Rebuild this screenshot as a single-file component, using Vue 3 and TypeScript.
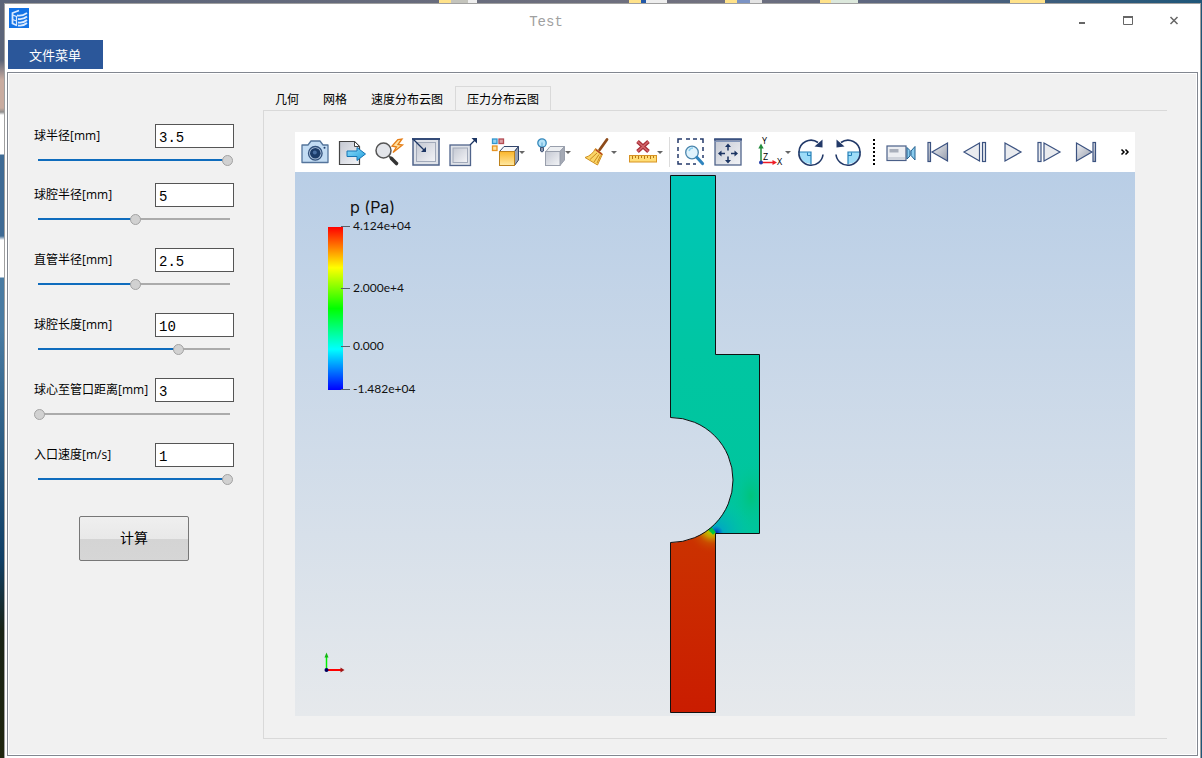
<script setup lang="ts">
import { reactive, ref } from 'vue'

interface Param {
  id: string
  label: string
  value: string
  position: number
}

const params = reactive<Param[]>([
  { id: 'ball-radius', label: '球半径[mm]', value: '3.5', position: 100 },
  { id: 'cavity-radius', label: '球腔半径[mm]', value: '5', position: 51 },
  { id: 'pipe-radius', label: '直管半径[mm]', value: '2.5', position: 51 },
  { id: 'cavity-length', label: '球腔长度[mm]', value: '10', position: 74 },
  { id: 'center-distance', label: '球心至管口距离[mm]', value: '3', position: 0 },
  { id: 'inlet-speed', label: '入口速度[m/s]', value: '1', position: 100 }
])

const tabs: string[] = ['几何', '网格', '速度分布云图', '压力分布云图']
const activeTab = ref<string>('压力分布云图')

const ticks: { y: number; text: string }[] = [
  { y: 55, text: '4.124e+04' },
  { y: 117, text: '2.000e+4' },
  { y: 175, text: '0.000' },
  { y: 218, text: '-1.482e+04' }
]
</script>

<template>
  <div class="desktop">
    <div class="window">
      <header class="titlebar">
        <svg class="app-icon" viewBox="0 0 20 20" aria-hidden="true">
          <rect width="20" height="20" fill="#1473e6" />
          <g fill="none" stroke="#dcebff" stroke-width="1.800">
            <path d="M10 2.500 3.500 5v10.500l4.500 2" />
            <path d="M3.500 7l4 1.500v8.500M3.500 11.500l4 1.500" stroke-width="1.200" />
            <path d="M8 7.500q5 1 10-2.500M9 11q5 1 9-2.500M9 14.500q5 1 9-2.500M9 17.500q5 1 9-2.500" />
          </g>
        </svg>
        <h1 class="title">Test</h1>
        <div class="controls">
          <button type="button" aria-label="最小化">
            <svg viewBox="0 0 12 12"><path d="M3 9h6" stroke="#666" stroke-width="2" /></svg>
          </button>
          <button type="button" aria-label="最大化">
            <svg viewBox="0 0 12 12"><path d="M1 3h10" stroke="#666" stroke-width="2" /><path d="M1.500 3v7.500h9V3" fill="none" stroke="#666" /></svg>
          </button>
          <button type="button" aria-label="关闭">
            <svg viewBox="0 0 12 12"><path d="M2.500 3l7 7M9.500 3l-7 7" stroke="#666" stroke-width="1.500" /></svg>
          </button>
        </div>
      </header>

      <nav class="menubar">
        <button type="button" class="menu">文件菜单</button>
      </nav>

      <main class="workspace">
        <form class="params" @submit.prevent>
          <div v-for="p in params" :key="p.id" class="param">
            <label :for="p.id">{{ p.label }}</label>
            <input :id="p.id" v-model="p.value" class="field" type="text" />
            <input
              v-model.number="p.position"
              class="slider"
              type="range"
              min="0"
              max="100"
              :aria-label="p.label"
              :style="{ '--fill': p.position + '%' }"
            />
          </div>
          <button type="submit" class="compute">计算</button>
        </form>

        <section class="results">
          <div class="tabs" role="tablist">
            <button
              v-for="t in tabs"
              :key="t"
              type="button"
              role="tab"
              class="tab"
              :class="{ active: t === activeTab }"
              :aria-selected="t === activeTab"
              @click="activeTab = t"
            >{{ t }}</button>
          </div>

          <div class="page">
            <div class="toolbar" role="toolbar">
              <button type="button" class="tool" aria-label="截图">
                <svg viewBox="0 0 28 28">
                  <path d="M1 7h6l3-4h9l3 4h5v17.500H1z" fill="#c3dcf3" stroke="#54749b" stroke-width="1.300" stroke-linejoin="round" />
                  <circle cx="14.300" cy="15.300" r="6.800" fill="#b4c9e0" stroke="#33527d" stroke-width="1.300" />
                  <circle cx="14.300" cy="15.300" r="5.300" fill="#1c3c69" />
                  <circle cx="13.800" cy="14.500" r="2" fill="#4a70a3" />
                  <circle cx="23.500" cy="9.700" r="1" fill="#22406c" />
                </svg>
              </button>
              <button type="button" class="tool" aria-label="导出">
                <svg viewBox="0 0 28 28">
                  <defs>
                    <linearGradient id="steel" x1="0" y1="0" x2="1" y2="1"><stop stop-color="#c4c8d2" /><stop offset="1" stop-color="#f3f4f7" /></linearGradient>
                    <linearGradient id="steel-dark" x1="0" y1="0" x2="1" y2="1"><stop stop-color="#f0f1f4" /><stop offset="1" stop-color="#959cab" /></linearGradient>
                    <linearGradient id="sky" x1="0" y1="0" x2="1" y2="1"><stop stop-color="#8ddcfb" /><stop offset="1" stop-color="#22a0dc" /></linearGradient>
                    <linearGradient id="gold" x1="0" y1="0" x2="0" y2="1"><stop stop-color="#fbb62b" /><stop offset="1" stop-color="#ffe9a3" /></linearGradient>
                  </defs>
                  <path d="M1.500 3.500h15l5 5V26.500h-20z" fill="url(#steel)" stroke="#444" stroke-width="1.200" />
                  <path d="M16.500 3.500v5h5z" fill="#fff" stroke="#444" />
                  <path d="M9 13h10V9.500l8.500 6.500-8.500 6.500V18.500H9z" fill="url(#sky)" stroke="#1674b4" />
                </svg>
              </button>
              <button type="button" class="tool" aria-label="重新缩放">
                <svg viewBox="0 0 28 28">
                  <circle cx="8.500" cy="12.500" r="7.500" fill="#e3e5ea" stroke="#555" stroke-width="1.500" />
                  <path d="M14 18l2.500 2.500" stroke="#555" stroke-width="2" />
                  <path d="M16.500 20.500l5 5" stroke="#333" stroke-width="3.600" stroke-linecap="round" />
                  <path d="M23 1.500 17 8l4.500 1L18 14.500 27.500 7l-4.500-.5 4-5.500z" fill="#ffe1a0" stroke="#e57e18" stroke-width="1.300" />
                </svg>
              </button>
              <button type="button" class="tool" aria-label="缩小选区">
                <svg viewBox="0 0 28 28">
                  <rect x="1" y="1" width="26" height="26" fill="#dfe2e8" stroke="#50648b" stroke-width="1.500" />
                  <path d="M0 1h28" stroke="#344b78" stroke-width="2" />
                  <rect x="4.500" y="4.500" width="19" height="19" fill="url(#steel)" stroke="#a2aaba" />
                  <path d="M1.500 1.500 12 12" stroke="#1c3563" stroke-width="1.300" />
                  <path d="M14 14H9l5-5z" fill="#1c3563" />
                </svg>
              </button>
              <button type="button" class="tool" aria-label="放大选区">
                <svg viewBox="0 0 28 28">
                  <rect x="1" y="7" width="20.500" height="20.500" fill="#dfe2e8" stroke="#50648b" stroke-width="1.300" />
                  <rect x="4" y="10" width="14.500" height="14.500" fill="url(#steel)" stroke="#a2aaba" />
                  <path d="M21 7l5-5" stroke="#1c3563" stroke-width="1.300" />
                  <path d="M28 0v5.500L22.500 0z" fill="#1c3563" />
                </svg>
              </button>

              <button type="button" class="tool drop" aria-label="块着色">
                <svg viewBox="0 0 28 28">
                  <rect x="1.500" y="1" width="4.500" height="4.500" fill="#8fd0f2" stroke="#3296cd" stroke-width="1.300" />
                  <rect x="8" y="1" width="4.500" height="4.500" fill="#dca0a5" stroke="#b34c54" stroke-width="1.300" />
                  <rect x="1.500" y="8" width="4.500" height="4.500" fill="#ffe19b" stroke="#e69322" stroke-width="1.300" />
                  <path d="M8.500 13.500 13 8.500h14.500l-4 5z" fill="#f5f6f8" stroke="#33466c" />
                  <path d="M23.500 13.500l4-5V22l-4 5.500z" fill="#97a1b3" stroke="#33466c" />
                  <rect x="8.500" y="13.500" width="15" height="14" fill="url(#gold)" stroke="#bd821c" />
                </svg>
                <i class="caret"></i>
              </button>
              <button type="button" class="tool drop" aria-label="光照">
                <svg viewBox="0 0 28 28">
                  <path d="M9 13.500 13 8.500h14.500l-4.500 5z" fill="#eceef1" stroke="#999fac" />
                  <path d="M23 13.500l4.500-5V22L23 27.500z" fill="#a4a9b4" stroke="#999fac" />
                  <rect x="8.500" y="13.500" width="14.500" height="14" fill="url(#steel)" stroke="#999fac" />
                  <circle cx="5" cy="5" r="4.200" fill="#b5e2f8" stroke="#3689bc" stroke-width="1.300" />
                  <path d="M5 4.500v4" fill="none" stroke="#5ba7d2" />
                  <path d="M3.500 9.500h3v3.500l-1.500 1-1.500-1z" fill="#8c97ad" stroke="#405275" />
                </svg>
                <i class="caret"></i>
              </button>
              <button type="button" class="tool drop" aria-label="清理">
                <svg viewBox="0 0 28 28">
                  <path d="M24 1.500 16.500 12" stroke="#8d4b1a" stroke-width="2.800" stroke-linecap="round" />
                  <path d="M12.500 10.500l7 5.500L14.500 27 2 19.500q7-2 10.500-9z" fill="#fbd567" stroke="#cf9020" />
                  <path d="M12.500 11.500l6.500 5" stroke="#b43c20" stroke-width="1.500" />
                  <path d="M14 15 7 21.500M16 16.500l-5 7.500M17.500 17.500 14 25" stroke="#c98a20" fill="none" />
                </svg>
                <i class="caret"></i>
              </button>
              <button type="button" class="tool drop" aria-label="删除标尺">
                <svg viewBox="0 0 28 28">
                  <path d="M8.500 3.500l11 10M19.500 3.500l-11 10" stroke="#a92f38" stroke-width="3.800" />
                  <path d="M8.500 3.500l11 10M19.500 3.500l-11 10" stroke="#d3686e" stroke-width="1.500" />
                  <rect x=".5" y="17.500" width="27" height="6.500" fill="#ffdd75" stroke="#d79323" />
                  <path d="M3.500 18v3M6.500 18v2M9.500 18v3M12.500 18v2M15.500 18v3M18.500 18v2M21.500 18v3M24.500 18v2" stroke="#b97814" />
                </svg>
                <i class="caret"></i>
              </button>

              <span class="separator"></span>

              <button type="button" class="tool" aria-label="框选缩放">
                <svg viewBox="0 0 28 28">
                  <path d="M0 5V1h4M8 1h4M15 1h4M22 1h3v4M25 9v4M25 17v3M0 9v4M0 16v4M0 23v3h4M8 26h4M15 26h3" fill="none" stroke="#243a6b" stroke-width="1.500" />
                  <circle cx="14" cy="14.500" r="6.300" fill="#dff3fd" stroke="#4b86ad" stroke-width="1.300" />
                  <path d="M11 13q1-3 4-3" fill="none" stroke="#8bcdec" stroke-width="1.500" />
                  <path d="M19 19.500l5.500 6" stroke="#2f84be" stroke-width="3.200" stroke-linecap="round" />
                </svg>
              </button>
              <button type="button" class="tool" aria-label="平移">
                <svg viewBox="0 0 28 28">
                  <rect x="0" y="1" width="26" height="26" fill="url(#steel)" stroke="#50648b" stroke-width="1.300" />
                  <path d="M-1 1.500h28" stroke="#3a5180" stroke-width="2" />
                  <path d="M0 3.500h26" stroke="#8295b8" />
                  <path d="M13 8v4.500M13 18.500V23M5.500 15.500H10M16 15.500h4.500" stroke="#1c3563" stroke-width="1.500" />
                  <path d="M13 5.500l3 3.500h-6zM13 25.500l3-3.500h-6zM3 15.500l3.500-3v6zM23 15.500l-3.500-3v6z" fill="#1c3563" />
                </svg>
              </button>
              <button type="button" class="tool drop" aria-label="坐标轴方向">
                <svg viewBox="0 0 28 28">
                  <path d="M4 24V9" stroke="#228b3c" stroke-width="1.500" />
                  <path d="M4 5.500l2.700 5H1.300z" fill="#228b3c" />
                  <path d="M4 24.500h12" stroke="#ee1c25" stroke-width="1.500" />
                  <path d="M20 24.500l-4.500-2.500v5z" fill="#ee1c25" />
                  <circle cx="4" cy="24.500" r="2" fill="#213aa8" />
                  <g class="axis-letters"><text x="5" y="6">Y</text><text x="6" y="22">Z</text><text x="20" y="27">X</text></g>
                </svg>
                <i class="caret"></i>
              </button>
              <button type="button" class="tool" aria-label="顺时针旋转">
                <svg viewBox="0 0 28 28">
                  <path d="M1 14h12v12Q2 25 1 14z" fill="#9ddcf8" />
                  <path d="M0 14h13v12.500" fill="none" stroke="#2580b8" stroke-width="1.200" />
                  <path d="M9.500 14.500v3H13" fill="none" stroke="#2580b8" />
                  <path d="M20 4.500A12 12 0 0 0 1 14M25 16.500A12 12 0 0 1 1 14" fill="none" stroke="#223968" stroke-width="1.600" />
                  <path d="M24.500 1.500v8l-8-1z" fill="#223968" />
                </svg>
              </button>
              <button type="button" class="tool" aria-label="逆时针旋转">
                <svg viewBox="0 0 28 28">
                  <path d="M25 14H13v12Q24 25 25 14z" fill="#9ddcf8" />
                  <path d="M26 14H13v12.500" fill="none" stroke="#2580b8" stroke-width="1.200" />
                  <path d="M16.500 14.500v3H13" fill="none" stroke="#2580b8" />
                  <path d="M6 4.500A12 12 0 0 1 25 14M1 16.500A12 12 0 0 0 25 14" fill="none" stroke="#223968" stroke-width="1.600" />
                  <path d="M1.500 1.500v8l8-1z" fill="#223968" />
                </svg>
              </button>

              <span class="grip"></span>

              <button type="button" class="tool" aria-label="录制">
                <svg viewBox="0 0 28 28">
                  <rect x="0" y="8" width="19" height="14.500" fill="#eceef2" stroke="#4a5f88" stroke-width="1.200" />
                  <path d="M1 19h17v3H1z" fill="#cfd3db" />
                  <rect x="2.500" y="11" width="9" height="3.500" fill="#a9afbb" />
                  <path d="M20 9.500l3 3v5.500l-3 3zM28 8.500v13.500l-4-4.500v-4.500z" fill="#8acbee" stroke="#23608f" />
                </svg>
              </button>
              <button type="button" class="tool" aria-label="第一帧">
                <svg viewBox="0 0 28 28" fill="url(#steel-dark)" stroke="#3b5280" stroke-width="1.200">
                  <rect x="4" y="4.500" width="2.500" height="19" /><path d="M23.500 5v18L8 14z" />
                </svg>
              </button>
              <button type="button" class="tool" aria-label="上一帧">
                <svg viewBox="0 0 28 28" fill="#e9ebef" stroke="#3b5280" stroke-width="1.200">
                  <path d="M18.500 5v18L3 14z" /><rect x="21.500" y="4.500" width="3" height="19" />
                </svg>
              </button>
              <button type="button" class="tool" aria-label="播放">
                <svg viewBox="0 0 28 28" fill="#e9ebef" stroke="#3b5280" stroke-width="1.200"><path d="M7 5v18l16-9z" /></svg>
              </button>
              <button type="button" class="tool" aria-label="下一帧">
                <svg viewBox="0 0 28 28" fill="#e9ebef" stroke="#3b5280" stroke-width="1.200">
                  <rect x="3" y="4.500" width="3" height="19" /><path d="M9 5v18l16-9z" />
                </svg>
              </button>
              <button type="button" class="tool" aria-label="最后一帧">
                <svg viewBox="0 0 28 28" fill="url(#steel-dark)" stroke="#3b5280" stroke-width="1.200">
                  <path d="M4.500 5v18L20 14z" /><rect x="21" y="4.500" width="2.500" height="19" />
                </svg>
              </button>
              <button type="button" class="more" aria-label="更多">
                <svg viewBox="0 0 10 8"><path d="M1.500 1.500 4 4 1.500 6.500M5.500 1.500 8 4 5.500 6.500" fill="none" stroke="#000" stroke-width="1.500" /></svg>
              </button>
            </div>

            <svg class="view" viewBox="0 0 840 544" role="img" aria-label="p (Pa)">
              <defs>
                <linearGradient id="bar" x1="0" y1="0" x2="0" y2="1">
                  <stop stop-color="#f00" />
                  <stop offset=".25" stop-color="#ff0" />
                  <stop offset=".5" stop-color="#0f0" />
                  <stop offset=".75" stop-color="#0ff" />
                  <stop offset="1" stop-color="#00f" />
                </linearGradient>
                <linearGradient id="low" x1="0" y1="0" x2="0" y2="1">
                  <stop stop-color="#00c6b9" />
                  <stop offset=".5" stop-color="#00c6a2" />
                  <stop offset="1" stop-color="#00c59c" />
                </linearGradient>
                <linearGradient id="high" x1="0" y1="0" x2="0" y2="1">
                  <stop stop-color="#cb3400" />
                  <stop offset="1" stop-color="#ca1c00" />
                </linearGradient>
                <radialGradient id="throat" gradientUnits="userSpaceOnUse" cx="417" cy="356" r="26">
                  <stop offset=".1" stop-color="#2fc400" />
                  <stop offset=".2" stop-color="#b9c400" />
                  <stop offset=".35" stop-color="#c99a00" />
                  <stop offset=".6" stop-color="#cb5a00" stop-opacity=".6" />
                  <stop offset="1" stop-color="#cb3400" stop-opacity="0" />
                </radialGradient>
                <radialGradient id="jet" gradientUnits="userSpaceOnUse" cx="421" cy="361" r="36">
                  <stop stop-color="#0020c8" />
                  <stop offset=".08" stop-color="#0060c8" />
                  <stop offset=".2" stop-color="#00a4c8" stop-opacity=".8" />
                  <stop offset="1" stop-color="#00c4b0" stop-opacity="0" />
                </radialGradient>
                <radialGradient id="patch"><stop stop-color="#00c47c" /><stop offset="1" stop-color="#00c59c" stop-opacity="0" /></radialGradient>
                <clipPath id="section">
                  <path d="M375.500 3.500H420.500V182.500H464.500V361.500H420.500V540.500H375.500V370.500A62.500 62.500 0 0 0 375.500 245.500Z" />
                </clipPath>
              </defs>

              <g clip-path="url(#section)">
                <rect x="375" y="3" width="90" height="360" fill="url(#low)" />
                <ellipse cx="456" cy="324" rx="20" ry="36" fill="url(#patch)" />
                <rect x="390" y="310" width="75" height="52" fill="url(#jet)" />
                <path d="M375 365 410 350 421 361.500V541H375Z" fill="url(#high)" />
                <path d="M375 365 410 350 421 361.500V400H375Z" fill="url(#throat)" />
                <path d="M411 352l8.500 9.500" stroke="#00c43c" stroke-width="4" />
              </g>
              <path d="M375.500 3.500H420.500V182.500H464.500V361.500H420.500V540.500H375.500V370.500A62.500 62.500 0 0 0 375.500 245.500Z" fill="none" stroke="#111" />

              <text class="legend-title" x="55" y="41">p (Pa)</text>
              <rect x="33" y="55" width="15" height="163" fill="url(#bar)" />
              <g v-for="t in ticks" :key="t.text">
                <path :d="`M46 ${t.y - 0.5}h9`" stroke="#55606b" />
                <text class="legend-label" x="58" :y="t.y + 3">{{ t.text }}</text>
              </g>

              <path d="M31.500 498V484" stroke="#00f000" stroke-width="1.500" />
              <path d="M31.500 480.500l2 5h-4z" fill="#12b512" />
              <path d="M32 498h14" stroke="#f00" stroke-width="2" />
              <path d="M49.500 498l-4-2.500v5z" fill="#a01818" />
              <circle cx="31.500" cy="498" r="2" fill="#000060" />
            </svg>
          </div>
        </section>
      </main>
    </div>
  </div>
</template>

<style>
body {
  margin: 0;
}
</style>

<style scoped>
* {
  box-sizing: border-box;
}

button,
input {
  margin: 0;
  font: inherit;
  color: inherit;
}

button {
  padding: 0;
  border: 0;
  background: none;
}

.desktop {
  display: flex;
  min-height: 100vh;
  padding: 3px 1px 0 4px;
  font-family: "Open Sans", "Noto Sans CJK SC", sans-serif;
  font-size: 12px;
  color: #000;
  background:
    linear-gradient(90deg,
      transparent 439px, #ffe28a 439px 451px, #c4c4bc 451px 468px, #eee 468px 477px,
      transparent 477px 629px, #ffe28a 629px 641px, #2358a8 641px 646px, #eee 646px 667px,
      transparent 667px 725px, #ffe28a 725px 737px, #7b93c4 737px 750px, #e4e4e4 750px 762px,
      transparent 762px 820px, #ffe28a 820px 831px, #dce8dc 831px 858px,
      transparent 858px 1010px, #ffe28a 1010px 1045px, transparent 1045px) 0 0 / 100% 3px no-repeat,
    linear-gradient(90deg, #5a6479, #71717f 60%, #55637f 78%, #1e5679) 0 0 / 100% 3px no-repeat,
    linear-gradient(#5b6478 60px, #c9aca0 80px 108px, #8e8e8e 112px, #fff 115px 154px, #3f6b95 155px 236px, #fff 240px 277px, #4a7ba2 278px 330px, #37688f 400px, #103f66 560px, #1a2416 630px, #20260f) 0 0 / 4px 100% no-repeat,
    #1e5679;
}

.window {
  display: flex;
  flex: 1;
  flex-direction: column;
  min-width: 0;
  border: 1px solid #a0a0a0;
  border-bottom: 0;
  background: #fff;
}

.titlebar {
  display: flex;
  align-items: flex-start;
  height: 36px;
  padding-left: 4px;
}

.app-icon {
  width: 20px;
  height: 20px;
  margin-top: 4px;
}

.title {
  flex: 1;
  margin: 0;
  padding-left: 4px;
  font: 14px/36px "Liberation Mono", monospace;
  text-align: center;
  color: #a0a0a0;
}

.controls {
  display: flex;
  padding-right: 3px;
}

.controls button {
  display: grid;
  place-items: center;
  width: 46px;
  height: 32px;
}

.controls svg {
  width: 12px;
  height: 12px;
}

.menubar {
  padding: 0 3px 3px;
}

.menu {
  display: block;
  height: 29px;
  padding: 0 22px 0 21px;
  font-size: 13px;
  color: #fff;
  background: #2b579a;
}

.workspace {
  display: flex;
  flex: 1;
  min-height: 0;
  margin: 0 2px 2px;
  padding: 12px 30px 16px 0;
  border: 1px solid #828790;
  outline: 1px solid #fff;
  outline-offset: -2px;
  background: #f1f1f1;
}

.params {
  flex: none;
  width: 255px;
  padding: 39px 29px 0 26px;
}

.param {
  display: grid;
  grid-template-columns: 1fr 79px;
  row-gap: 7px;
  margin-bottom: 23px;
}

.param:first-child {
  margin-bottom: 17px;
}

.param label {
  line-height: 24px;
  white-space: nowrap;
}

.field {
  width: 79px;
  height: 24px;
  padding: 3px 3px 0;
  border: 1px solid #555;
  font: 14px "Liberation Mono", monospace;
  background: #fff;
}

.slider {
  grid-column: 1 / -1;
  width: 199px;
  height: 11px;
  appearance: none;
  background: linear-gradient(90deg, #0f6cbd var(--fill), #ababab var(--fill)) 4px 4px / calc(100% - 7px) 2px no-repeat;
}

.slider::-webkit-slider-thumb {
  appearance: none;
  width: 11px;
  height: 11px;
  border: 1px solid #a3a3a3;
  border-radius: 50%;
  background: #d1d1d1;
}

.compute {
  display: block;
  width: 110px;
  height: 45px;
  margin: 31px 0 0 45px;
  padding-bottom: 3px;
  border: 1px solid #777;
  border-radius: 2px;
  font-size: 14px;
  background: linear-gradient(#efefef, #e8e8e8 52%, #d4d4d4 52%, #d6d6d6);
}

.results {
  display: flex;
  flex: 1;
  flex-direction: column;
  min-width: 0;
}

.tabs {
  display: flex;
  margin-top: 1px;
}

.tab {
  height: 24px;
  padding: 0 11px;
  border: 1px solid transparent;
  border-bottom: 0;
}

.tab.active {
  border-color: #d9d9d9;
}

.page {
  display: flex;
  flex: 1;
  flex-direction: column;
  min-height: 0;
  padding: 21px 32px 22px 31px;
  border: 1px solid #d9d9d9;
  border-right: 0;
}

.toolbar {
  display: flex;
  flex: none;
  align-items: center;
  height: 40px;
  padding-left: 1px;
  background: #fff;
}

.tool {
  display: flex;
  flex: none;
  align-items: center;
  width: 37px;
  height: 40px;
  padding: 0 4px 0 5px;
}

.tool.drop {
  width: 46px;
  padding: 0 0 0 10px;
}

.tool svg {
  flex: none;
  width: 28px;
  height: 28px;
  overflow: visible;
}

.caret {
  border: 3px solid transparent;
  border-top-color: #666;
  border-bottom: 0;
}

.axis-letters {
  font: 9px "Open Sans", sans-serif;
}

.separator {
  width: 8px;
  height: 30px;
  background: linear-gradient(#dcdcdc, #dcdcdc) 4px 0 / 1px 100% no-repeat;
}

.grip {
  width: 15px;
  height: 27px;
  background: repeating-linear-gradient(#000 0 2px, transparent 2px 4px) 6px 0 / 2px 100% no-repeat;
}

.more {
  display: grid;
  place-items: center;
  width: 20px;
  height: 40px;
  margin-left: auto;
}

.more svg {
  width: 10px;
  height: 8px;
}

.view {
  display: block;
  flex: 1;
  width: 100%;
  min-height: 0;
  background: linear-gradient(#b9cee6, #e6e9ec);
}

.legend-title {
  font: 16px Inter, sans-serif;
  fill: #111;
}

.legend-label {
  font: 12px Lato, sans-serif;
  fill: #111;
}
</style>
